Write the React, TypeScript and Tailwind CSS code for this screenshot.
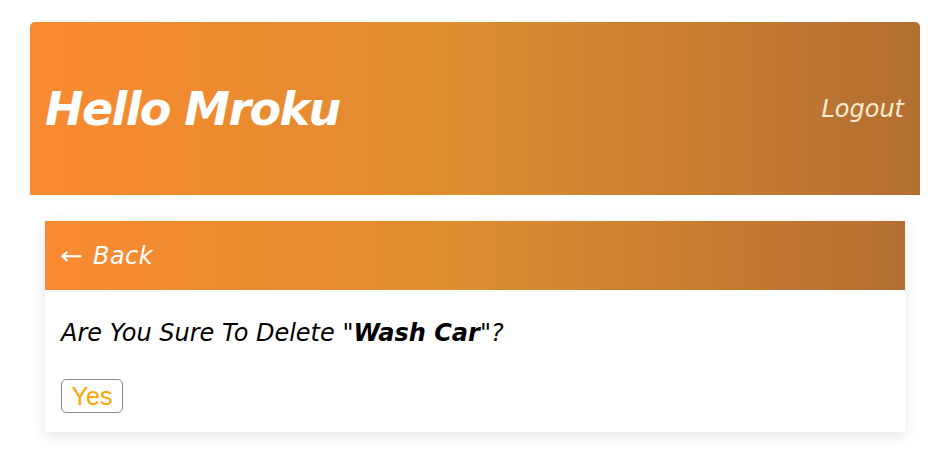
import React from "react";

export default function App() {
  const grad = "bg-[linear-gradient(to_right,#fa8a31,#dc8d30_50%,#b36e32)]";
  return (
    <div className="min-h-[463px] bg-white pl-[30px] pt-[22px] font-['DejaVu_Sans',sans-serif]">
      <header className={`flex h-[173px] w-[890px] items-center justify-between rounded-t-[5px] pl-[15px] pr-[16px] ${grad}`}>
        <h1 className="text-[46px] font-bold italic leading-none tracking-[-1.6px] text-white">Hello Mroku</h1>
        <a className="text-[24px] italic leading-none text-[#fcebd3]">Logout</a>
      </header>
      <div className="ml-[15px] mt-[26px] w-[860px] bg-white shadow-[0_4px_16px_rgba(0,0,0,0.1)]">
        <div className={`flex h-[69px] items-center px-[15px] ${grad}`}>
          <span className="text-[24px] leading-none text-white">
            <span className="inline-block origin-left scale-x-[1.15] not-italic">←</span>
            <span className="ml-[13px] italic tracking-[0.4px]">Back</span>
          </span>
        </div>
        <div className="px-[16px] pb-[19px] pt-[30px]">
          <p className="text-[24px] italic leading-[26px] tracking-[0px] text-black">
            Are You Sure To Delete "<b className="font-bold">Wash Car</b>"?
          </p>
          <button className="mt-[33px] flex h-[34px] w-[62px] items-center justify-center rounded-[5px] border border-[#8a8a8a] font-['Liberation_Sans',Arial,sans-serif] text-[25px] leading-none text-[#ffa500]">
            Yes
          </button>
        </div>
      </div>
    </div>
  );
}
